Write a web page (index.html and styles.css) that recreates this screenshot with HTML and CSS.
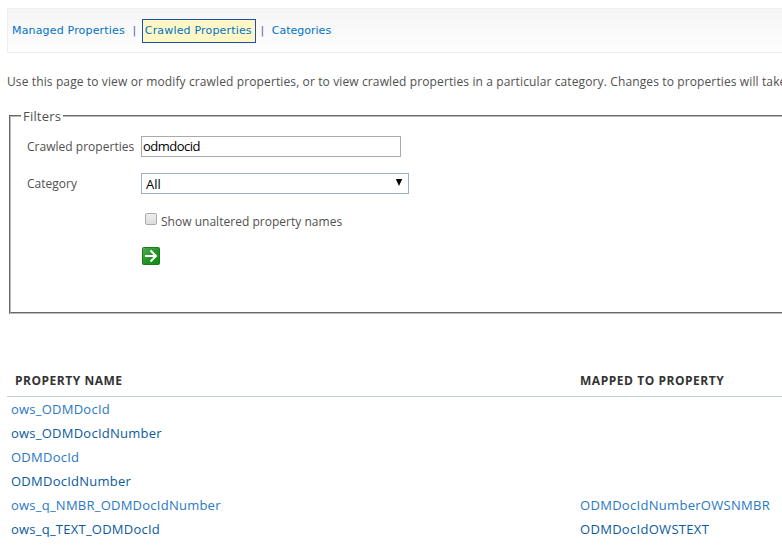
FILE: index.html
```html
<!DOCTYPE html>
<html lang="en">
<head>
<meta charset="utf-8">
<title>Crawled Properties</title>
<link rel="stylesheet" href="styles.css">
</head>
<body>
<nav class="tabs">
  <a class="tab" href="#">Managed Properties</a><span class="sep">|</span><a class="tab current" href="#">Crawled Properties</a><span class="sep sep-last">|</span><a class="tab last" href="#">Categories</a>
</nav>
<p class="intro">Use this page to view or modify crawled properties, or to view crawled properties in a particular category. Changes to properties will take</p>
<fieldset class="filters">
  <legend>Filters</legend>
  <div class="row row-query"><label class="label" for="q">Crawled properties</label><input id="q" class="query" type="text" value="odmdocid"></div>
  <div class="row row-category"><span class="label">Category</span><div class="select"><span>All</span><svg width="8" height="7" viewBox="0 0 8 7"><path d="M.8 0h6.4L4 7z" fill="#000"/></svg></div></div>
  <div class="row row-check"><span class="box"></span><span class="check-text">Show unaltered property names</span></div>
  <div class="row row-go">
    <svg width="18" height="18" viewBox="0 0 18 18">
      <defs><linearGradient id="g" x1="0" y1="0" x2="1" y2="1"><stop offset="0" stop-color="#55ad55"/><stop offset=".5" stop-color="#269326"/><stop offset="1" stop-color="#079007"/></linearGradient></defs>
      <rect x=".5" y=".5" width="17" height="17" rx="1" fill="url(#g)" stroke="#187a18"/>
      <path d="M3 9h11M8.500 3.500L14 9l-5.500 5.500" fill="none" stroke="#fff" stroke-width="2"/>
    </svg>
  </div>
</fieldset>
<div class="table">
  <div class="line head"><b class="name">PROPERTY NAME</b><b class="mapped">MAPPED TO PROPERTY</b></div>
  <div class="line"><a class="name" href="#">ows_ODMDocId</a></div>
  <div class="line alt"><a class="name" href="#">ows_ODMDocIdNumber</a></div>
  <div class="line"><a class="name" href="#">ODMDocId</a></div>
  <div class="line alt"><a class="name" href="#">ODMDocIdNumber</a></div>
  <div class="line"><a class="name" href="#">ows_q_NMBR_ODMDocIdNumber</a><a class="mapped" href="#">ODMDocIdNumberOWSNMBR</a></div>
  <div class="line alt"><a class="name" href="#">ows_q_TEXT_ODMDocId</a><a class="mapped" href="#">ODMDocIdOWSTEXT</a></div>
</div>
</body>
</html>
```
FILE: styles.css
```css
* { box-sizing: border-box; }
body {
  margin: 0;
  padding: 8px 0 0 7px;
  height: 545px;
  overflow: hidden;
  background: #fff;
  color: #505050;
  font: 12px/18px "Open Sans", "Noto Sans", sans-serif;
}
a { text-decoration: none; color: #0072c6; }
.tabs {
  display: flex;
  align-items: center;
  height: 45px;
  padding-left: 4px;
  border: 1px solid #eee;
  border-right: 0;
  background: linear-gradient(#f5f5f5, #fefefe);
  font: 11px/18px "DejaVu Sans", sans-serif;
  letter-spacing: .17px;
  white-space: nowrap;
}
.current {
  width: 114px;
  height: 24px;
  padding: 2px 0 0 2px;
  border: 1px solid #1d4fae;
  background: #fff8c6;
}
.sep { width: 17px; padding-left: 2px; text-align: center; color: #5a5cb8; }
.sep-last { width: 16px; padding: 0 3px 0 0; }
.last { letter-spacing: 0; }
.intro { margin: 20px 0 0; white-space: nowrap; letter-spacing: .12px; }
.filters {
  width: 775px;
  height: 207px;
  margin: 16px 0 0 2px;
  padding: 11px 0 0 16px;
  border: 2px groove #bbb;
  border-right: 0;
}
legend { margin-left: -6px; padding: 0 2px; font-size: 13px; letter-spacing: .2px; }
.row { display: flex; align-items: center; }
.label { width: 114px; padding-top: 1px; letter-spacing: .02px; white-space: nowrap; }
.query {
  width: 260px;
  height: 21px;
  padding: 0 1px 2px;
  border: 1px solid #aaa;
  font: 13px "Open Sans", sans-serif;
  letter-spacing: -.5px;
  color: #000;
}
.row-category { margin-top: 16px; }
.select {
  display: flex;
  align-items: center;
  justify-content: space-between;
  width: 268px;
  height: 21px;
  padding: 0 5px 0 4px;
  border: 1px solid #9bb0c3;
  color: #000;
  font-size: 13px;
}
.select span { padding-top: 1px; }
.select svg { margin-bottom: 2px; }
.row-check { margin: 17px 0 0 118px; }
.box {
  width: 12px;
  height: 12px;
  margin: 0 4px 4px 0;
  border: 1px solid #aaa;
  border-radius: 2px;
  background: linear-gradient(#eee, #ddd);
}
.check-text { padding-top: 2px; letter-spacing: .02px; }
.row-go { margin: 16px 0 0 115px; }
.row-go svg { display: block; }
.table { margin-top: 51px; }
.line { display: flex; height: 24px; align-items: center; padding-left: 4px; font-size: 13px; letter-spacing: .24px; }
.head { height: 32px; padding-left: 8px; border-bottom: 1px solid #c6cfd2; font-size: 12px; color: #333; letter-spacing: .52px; }
.name { width: 569px; }
.head .name { width: 565px; }
.line .mapped { letter-spacing: .3px; }
.head .mapped { letter-spacing: .54px; }
.line a { color: #2878c4; }
.alt a { color: #0b5a9c; }
```
